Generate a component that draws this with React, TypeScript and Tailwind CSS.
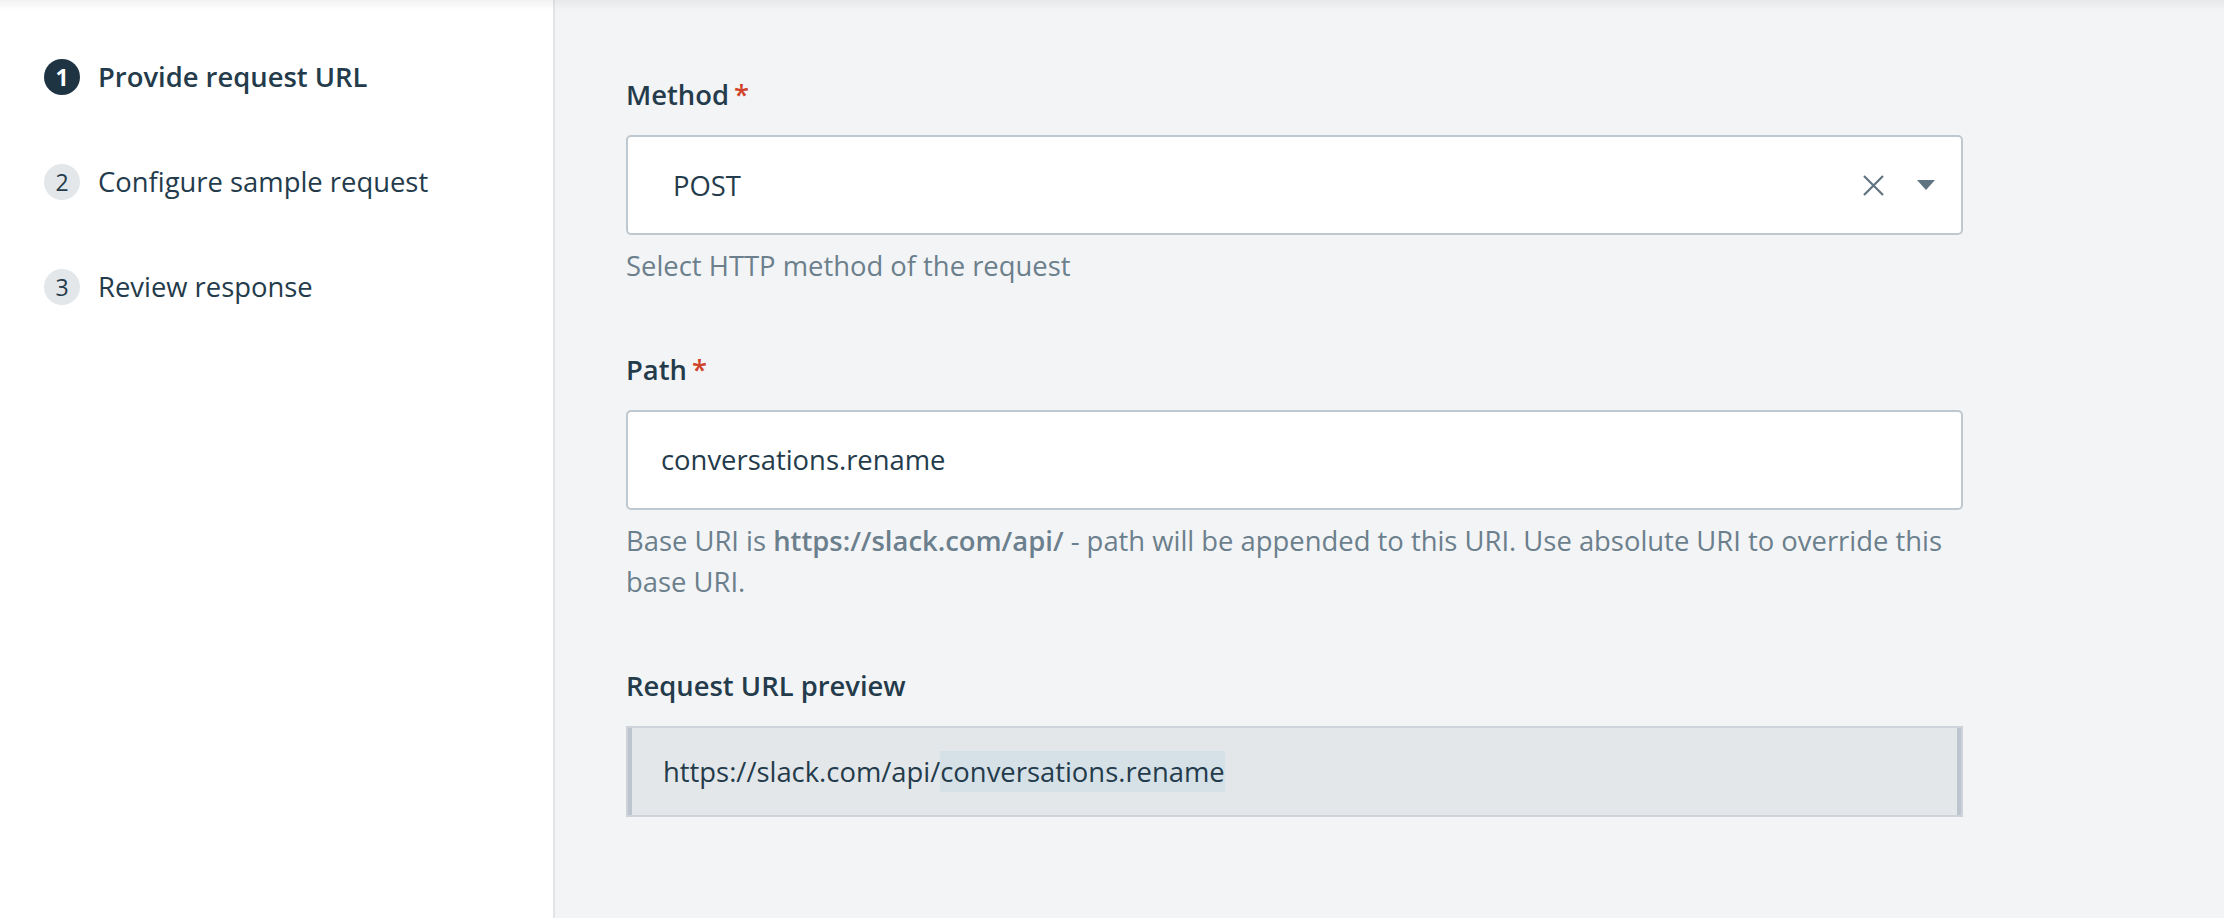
const steps = [
    { n: 1, label: "Provide request URL", active: true },
    { n: 2, label: "Configure sample request", active: false },
    { n: 3, label: "Review response", active: false },
];

function Label(props: { text: string; required?: boolean }) {
    return (
        <div className="h-[42px] leading-[42px] text-[27.4px] font-semibold text-[#243b4b]">
            {props.text}
            {props.required && <span className="ml-[5px] text-[#d0432a]">*</span>}
        </div>
    );
}

export default function App() {
    return (
        <div
            className="relative flex h-screen w-full bg-[#f3f4f6] text-[#243b4b]"
            style={{ fontFamily: '"Open Sans", "Noto Sans", sans-serif' }}
        >
            <div className="pointer-events-none absolute inset-x-0 top-0 h-[10px] bg-gradient-to-b from-black/[0.05] to-transparent" />

            {/* steps */}
            <aside className="w-[555px] shrink-0 border-r-2 border-[#e2e5e8] bg-white pl-[44px] pt-[59px]">
                <ul className="flex flex-col gap-[69px]">
                    {steps.map((s) => (
                        <li key={s.n} className="flex h-[36px] items-center gap-[18px]">
                            <span
                                className={`flex h-[36px] w-[36px] items-center justify-center rounded-full text-[23px] ${
                                    s.active ? "bg-[#1f3442] font-bold text-white" : "bg-[#e3e7ea] text-[#243b4b]"
                                }`}
                            >
                                {s.n}
                            </span>
                            <span className={`text-[27.4px] ${s.active ? "font-semibold" : ""}`}>{s.label}</span>
                        </li>
                    ))}
                </ul>
            </aside>

            {/* form */}
            <main className="flex-1 pl-[71px] pt-[74px]">
                <div className="w-[1337px]">
                    <Label text="Method" required />
                    <div className="mt-[19px] flex h-[100px] items-center rounded-[5px] border-2 border-[#bfc8cf] bg-white pl-[45px] pr-[26px]">
                        <span className="flex-1 pt-[2px] text-[27.4px]">POST</span>
                        <svg width="21" height="21" viewBox="0 0 21 21">
                            <path d="M1 1 L20 20 M20 1 L1 20" stroke="#5f7380" strokeWidth="2.2" fill="none" />
                        </svg>
                        <svg className="ml-[33px]" width="18" height="10" viewBox="0 0 18 10">
                            <path d="M0 0 H18 L9 10 Z" fill="#5f7380" />
                        </svg>
                    </div>
                    <p className="mt-[10px] text-[27.4px] leading-[42px] text-[#6b7f8c]">Select HTTP method of the request</p>

                    <div className="mt-[62px]">
                        <Label text="Path" required />
                    </div>
                    <div className="mt-[19px] flex h-[100px] items-center rounded-[5px] border-2 border-[#bfc8cf] bg-white pl-[33px]">
                        <span className="text-[27.4px]">conversations.rename</span>
                    </div>
                    <p className="mt-[10px] text-[27.4px] leading-[41px] text-[#6b7f8c]">
                        <span className="whitespace-nowrap">
                            Base URI is <b className="font-semibold">https://slack.com/api/</b> - path will be appended to this URI. Use absolute URI to override this
                        </span>
                        <br />
                        base URI.
                    </p>

                    <div className="mt-[63px]">
                        <Label text="Request URL preview" />
                    </div>
                    <div className="mt-[19px] flex h-[91px] border-2 border-[#cdd3d8] bg-[#e3e7ea]">
                        <div className="w-[4px] bg-[#bcc5cd]" />
                        <div className="flex flex-1 items-center pl-[31px] text-[27.4px]">
                            https://slack.com/api/
                            <span className="bg-[#d5e1e7]">conversations.rename</span>
                        </div>
                        <div className="w-[4px] bg-[#bcc5cd]" />
                    </div>
                </div>
            </main>
        </div>
    );
}
